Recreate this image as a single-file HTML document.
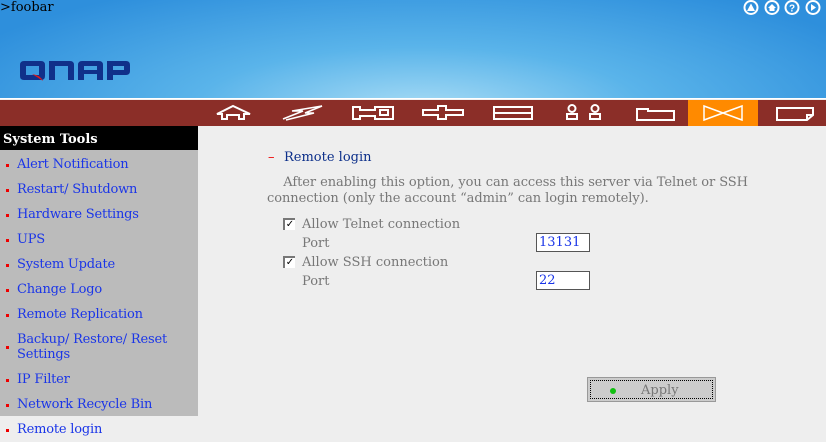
<!DOCTYPE html>
<html><head><style>
*{margin:0;padding:0;box-sizing:border-box}
body{width:826px;height:440px;overflow:hidden;background:#eeeeee;font-family:"DejaVu Serif","Liberation Serif",serif;font-size:13px;position:relative}
#hdr{position:absolute;left:0;top:0;width:826px;height:99px;background:radial-gradient(ellipse 500px 140px at 420px 110px,#a8dcf5 0%,#5ab4ea 45%,#2e8fdc 100%);border-bottom:1px solid #fff}
#bar{position:absolute;left:0;top:100px;width:826px;height:26px;background:#8b2e28}
.tab{position:absolute;top:0;height:26px}
#side{position:absolute;left:0;top:126px;width:198px;height:314px;background:#bbbbbb}
#side .t{height:24px;background:#000;color:#fff;font-weight:bold;padding:6px 3px 0;font-size:13px}
.it{position:relative;height:25px;color:#1a35e8;padding:6px 0 0 17px;line-height:15px;letter-spacing:-0.2px}
.it:before{content:"";position:absolute;left:6px;top:13px;width:3px;height:3px;background:#e00}
.it.two{height:40px}
.it.two:before{top:20px}
.it.sel{background:#eeeeee;height:26px}
.c{position:absolute;color:#777}
.box{position:absolute;width:54px;height:19px;background:#fff;border:1px solid #555;color:#1a35e8;font-size:13px;padding:1px 2px;line-height:15px}
.cb{position:absolute;width:12px;height:12px;background:#fff;border-top:2px solid #777;border-left:2px solid #777;font-size:10px;line-height:9px;color:#000;text-align:center}
</style></head><body>
<div id="hdr">
 <div style="position:absolute;left:0;top:0;font-size:13px;color:#000">&gt;foobar</div>
 <svg style="position:absolute;left:20px;top:60px" width="110" height="22" viewBox="0 0 110 22">
  <g fill="#10308a">
   <path d="M4 1H21Q25 1 25 5V16Q25 20 21 20H4Q0 20 0 16V5Q0 1 4 1ZM6 6V15H19V6Z"/>
   <path d="M29 1H50Q54 1 54 5V20H48V6H35V20H29Z"/>
   <path d="M58 20V5Q58 1 62 1H79Q83 1 83 5V20H77V14H64V20ZM64 6V10H77V6Z"/>
   <path d="M87 20V1H106Q110 1 110 5V11Q110 15 106 15H93V20ZM93 6V10H104V6Z"/>
  </g>
  <path d="M12 14Q20 15 23 21Q17 17 12 14Z" fill="#e01818"/>
 </svg>
 <svg style="position:absolute;left:742px;top:0" width="82" height="16" viewBox="0 0 82 16">
  <g fill="#fff"><circle cx="9" cy="7.5" r="7.5"/><circle cx="30" cy="7.5" r="7.5"/><circle cx="50" cy="7.5" r="7.5"/><circle cx="71" cy="7.5" r="7.5"/></g>
  <g fill="#2e8fdc"><circle cx="9" cy="7.5" r="5.5"/><circle cx="30" cy="7.5" r="5.5"/><circle cx="50" cy="7.5" r="5.5"/><circle cx="71" cy="7.5" r="5.5"/></g>
  <path d="M9 3.5L13 11H5Z M26 8L30 4L34 8H32.5V11H27.5V8Z M69 4L74 7.5L69 11Z" fill="#fff"/>
  <text x="50" y="11.5" font-size="10" font-weight="bold" fill="#fff" text-anchor="middle" font-family="Liberation Sans">?</text>
 </svg>
</div>
<div id="bar">
 <div class="tab" style="left:688px;width:70px;background:#ff8a00"></div>
 <svg style="position:absolute;left:0;top:0" width="826" height="26" fill="none" stroke="#fff" stroke-width="2">
  <path d="M217 14L233 6L250 14H244V19H239V15H227V19H222V14Z"/>
  <path d="M283 19L303 11H292L322 6L305 13H314L286 20" stroke-width="1.5"/>
  <path d="M353 7H360V10H375V7H393V19H375V16H360V19H353Z M380 10H388V15H380Z"/>
  <path d="M423 10H438V6H446V10H463V15H446V19H438V15H423Z"/>
  <path d="M494 7H532V19H494Z M494 13H532"/>
  <circle cx="572" cy="8.5" r="3.5"/><circle cx="595" cy="8.5" r="3.5"/>
  <path d="M567 14H577V19H567Z M590 14H600V19H590Z"/>
  <path d="M637 9H648V11H674V20H637Z"/>
  <path d="M704 6V20L723 13L742 6V20L723 13Z M704 6 L723 13 M704 20 L723 13" stroke-width="1.5"/>
  <path d="M777 8H813V15L807 20H777Z M807 20V15H813"/>
 </svg>
</div>
<div id="side">
 <div class="t">System Tools</div>
 <div class="it" style="margin-top:1px">Alert Notification</div>
 <div class="it">Restart/ Shutdown</div>
 <div class="it">Hardware Settings</div>
 <div class="it">UPS</div>
 <div class="it">System Update</div>
 <div class="it">Change Logo</div>
 <div class="it">Remote Replication</div>
 <div class="it two">Backup/ Restore/ Reset<br>Settings</div>
 <div class="it">IP Filter</div>
 <div class="it">Network Recycle Bin</div>
 <div class="it sel">Remote login</div>
</div>
<div class="c" style="left:268px;top:150px;color:#e00">–</div>
<div class="c" style="left:284px;top:150px;color:#0c2f8a">Remote login</div>
<div class="c" style="left:267px;top:175px;line-height:16px;white-space:nowrap;letter-spacing:-0.07px">&nbsp;&nbsp;&nbsp;&nbsp;After enabling this option, you can access this server via Telnet or SSH<br>connection (only the account “admin” can login remotely).</div>
<div class="cb" style="left:283px;top:218px">✓</div>
<div class="c" style="left:302px;top:217px">Allow Telnet connection</div>
<div class="c" style="left:302px;top:236px">Port</div>
<div class="box" style="left:536px;top:233px">13131</div>
<div class="cb" style="left:283px;top:256px">✓</div>
<div class="c" style="left:302px;top:255px">Allow SSH connection</div>
<div class="c" style="left:302px;top:274px">Port</div>
<div class="box" style="left:536px;top:271px">22</div>
<div style="position:absolute;left:587px;top:377px;width:129px;height:25px;background:#cccccc;border:1px solid #999;">
 <div style="position:absolute;left:2px;top:2px;right:2px;bottom:2px;border:1px dotted #000"></div>
 <div style="position:absolute;left:22px;top:10px;width:6px;height:6px;border-radius:50%;background:#10c010"></div>
 <div style="position:absolute;left:53px;top:5px;color:#777">Apply</div>
</div>
</body></html>
